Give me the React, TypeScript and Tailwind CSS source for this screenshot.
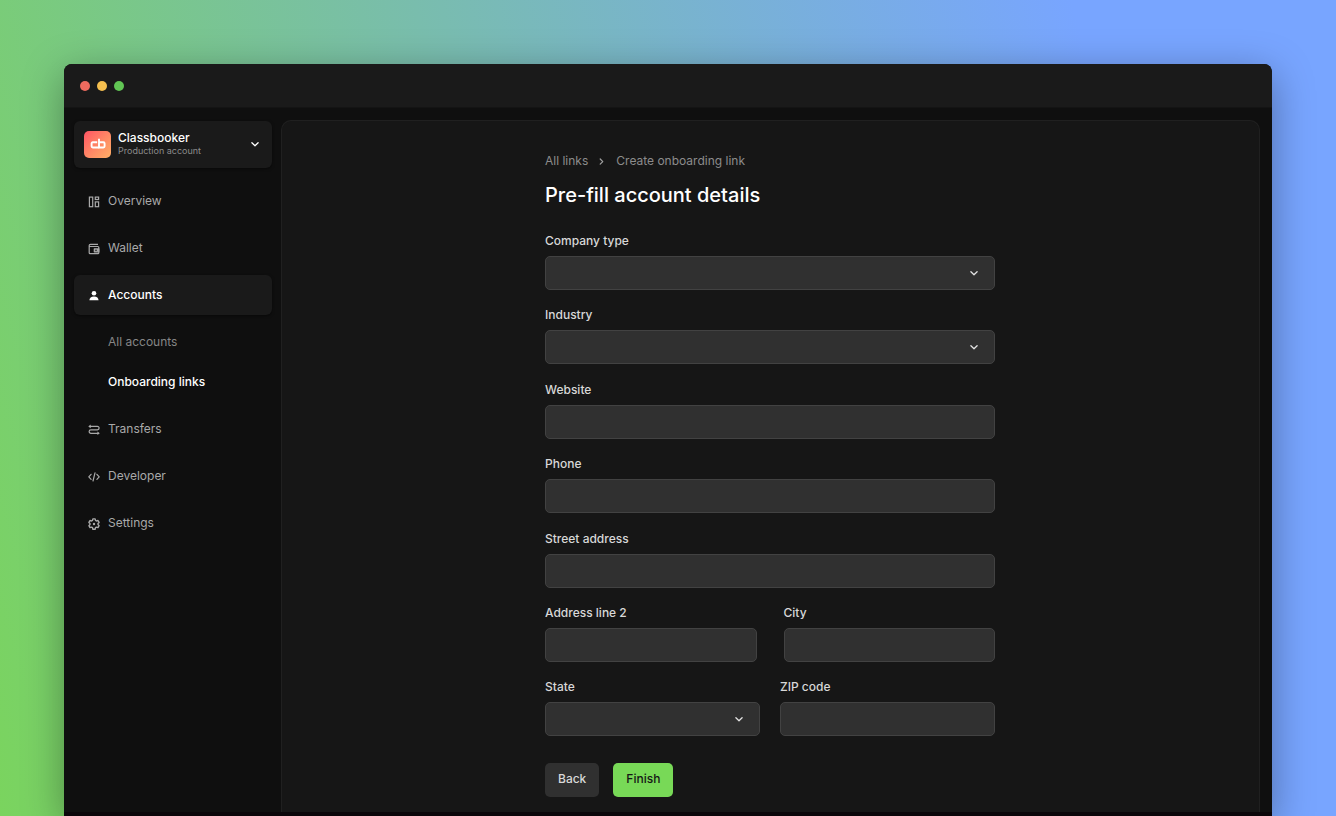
import React from "react";

type IconProps = { className?: string };

function ChevronDown({ className }: IconProps) {
  return (
    <svg viewBox="0 0 12 12" aria-hidden="true" className={className} fill="none" stroke="currentColor" strokeWidth="1.3" strokeLinecap="round" strokeLinejoin="round">
      <path d="M2.9 4.8 6 7.7l3.1-2.9" />
    </svg>
  );
}

function ChevronRight({ className }: IconProps) {
  return (
    <svg viewBox="0 0 12 12" aria-hidden="true" className={className} fill="none" stroke="currentColor" strokeWidth="1.2" strokeLinecap="round" strokeLinejoin="round">
      <path d="M4.2 4 6.8 6.6 4.2 9.2" />
    </svg>
  );
}

function OverviewIcon() {
  return (
    <svg viewBox="0 0 12 12" aria-hidden="true" className="size-3" fill="none" stroke="currentColor" strokeWidth="1.2">
      <rect x="1.4" y="1.1" width="3.3" height="9.6" />
      <rect x="7.3" y="1.1" width="3.3" height="2.4" />
      <rect x="7.3" y="5.9" width="3.3" height="4.8" />
    </svg>
  );
}

function WalletIcon() {
  return (
    <svg viewBox="0 0 12 12" aria-hidden="true" className="size-3" fill="none" stroke="currentColor" strokeWidth="1.2" strokeLinejoin="round">
      <path d="M10 1.3H2.4C1.7 1.3 1.2 1.8 1.2 2.5v7.3c0 .5.4.9.9.9h7.8c.5 0 .9-.4.9-.9V4.4c0-.5-.4-.9-.9-.9H1.2" />
      <path d="M10.8 5.9H6.3v2.9h4.5z" fill="currentColor" />
      <circle cx="8" cy="7.3" r=".8" fill="#0f0f0f" stroke="none" />
    </svg>
  );
}

function PersonIcon() {
  return (
    <svg viewBox="0 0 12 12" aria-hidden="true" className="size-3" fill="currentColor">
      <circle cx="6" cy="3.3" r="2.3" />
      <path d="M1.4 10.3c.2-2.6 1.6-3.9 4.6-3.9s4.4 1.3 4.6 3.9z" />
    </svg>
  );
}

function TransfersIcon() {
  return (
    <svg viewBox="0 0 12 12" aria-hidden="true" className="size-3" fill="none" stroke="currentColor" strokeWidth="1.2" strokeLinecap="round">
      <path d="M1.6 2.4h7.8a1.7 1.7 0 0 1 0 3.4H2.9a1.75 1.75 0 0 0 0 3.5h7.5" />
      <path d="M2.7.6v3.6L.3 2.4zM9.4 7.5v3.6l2.4-1.8z" fill="currentColor" stroke="none" />
    </svg>
  );
}

function CodeIcon() {
  return (
    <svg viewBox="0 0 12 12" aria-hidden="true" className="size-3" fill="none" stroke="currentColor" strokeWidth="1.2" strokeLinecap="round" strokeLinejoin="round">
      <path d="M3.1 3.3.8 5.8l2.3 2.5M8.9 3.3l2.3 2.5-2.3 2.5M7 1.8 5 10" />
    </svg>
  );
}

function GearIcon() {
  return (
    <svg viewBox="0 0 12 12" aria-hidden="true" className="size-3" fill="none" stroke="currentColor" strokeWidth="1.4" strokeLinejoin="round">
      <path d="M4.9.9h2.2l.4 1.5 1 .6 1.5-.5 1.1 1.9L10 5.5v1.1l1.1 1.1L10 9.6l-1.5-.5-1 .6-.4 1.5H4.9l-.4-1.5-1-.6-1.5.5L.9 7.7 2 6.6V5.5L.9 4.4 2 2.5l1.5.5 1-.6z" />
      <circle cx="6" cy="6" r="1.2" fill="currentColor" stroke="none" />
    </svg>
  );
}

function BrandMark() {
  return (
    <span className="flex size-[27px] shrink-0 items-center justify-center rounded-[5px] bg-linear-to-br from-[#ff5263] to-[#ffb066]">
      <svg viewBox="0 0 16 12" aria-hidden="true" className="h-3 w-4" fill="none" stroke="#fff" strokeWidth="1.9" strokeLinejoin="round">
        <path d="M7.2 4.3H2.8q-1.2 0-1.2 1.2v2.8q0 1.2 1.2 1.2h6.3" />
        <path d="M9 .8v8.7h4.4q1.2 0 1.2-1.2V5.5q0-1.2-1.2-1.2H9" />
      </svg>
    </span>
  );
}

function NavItem({ label, icon, active }: { label: string; icon: React.ReactNode; active?: boolean }) {
  return (
    <a
      href="#"
      aria-current={active ? "true" : undefined}
      className={
        active
          ? "flex h-10 items-center gap-2 rounded-md bg-[#1a1a1a] px-3.5 font-medium text-white shadow-[0_1px_3px_rgba(0,0,0,0.5)]"
          : "flex h-10 items-center gap-2 rounded-md px-3.5 text-[#a9a9a9]"
      }
    >
      <span className="pt-0.5">{icon}</span>
      {label}
    </a>
  );
}

const control = "h-[34px] w-full rounded-[5px] border border-[#424242] bg-[#303030] px-3 text-[#dedede] outline-none focus:border-[#78d957]";

function TextField({ id, label }: { id: string; label: string }) {
  return (
    <div className="flex flex-col gap-[7px]">
      <label htmlFor={id}>{label}</label>
      <input id={id} type="text" className={control} />
    </div>
  );
}

function SelectField({ id, label }: { id: string; label: string }) {
  return (
    <div className="flex flex-col gap-[7px]">
      <label htmlFor={id}>{label}</label>
      <div className="relative">
        <select id={id} className={`${control} appearance-none`}>
          <option value=""></option>
        </select>
        <ChevronDown className="pointer-events-none absolute top-[11px] right-[15px] size-3 text-[#e4e4e4]" />
      </div>
    </div>
  );
}

export default function App() {
  return (
    <div className="flex min-h-screen flex-col bg-[linear-gradient(75deg,#7ad45e_0%,#78a5ff_83%)] px-16 pt-16 font-['Inter',sans-serif] text-xs">
      <div className="flex grow flex-col overflow-hidden rounded-t-lg border-b-4 border-[#0b060a] bg-[#0f0f0f] shadow-[0_10px_40px_rgba(0,0,0,0.35)]">
        <header className="flex h-11 shrink-0 items-center gap-[7px] border-b border-[#141414] bg-[#1a1a1a] px-4">
          <span className="size-2.5 rounded-full bg-[#ed6a5e]" />
          <span className="size-2.5 rounded-full bg-[#f5bf4f]" />
          <span className="size-2.5 rounded-full bg-[#61c554]" />
        </header>

        <div className="flex grow gap-[9px] pr-3 pl-2.5">
          <aside className="w-[198px] shrink-0 pt-[13px]">
            <button type="button" className="flex h-[47px] w-full items-center gap-[7px] rounded-md bg-[#1a1a1a] pr-[11px] pb-px pl-2.5 text-left shadow-[0_1px_3px_rgba(0,0,0,0.5)]">
              <BrandMark />
              <span className="flex grow flex-col">
                <span className="leading-[14px] font-medium text-white">Classbooker</span>
                <span className="text-[9px] leading-3 text-[#8c8c8c]">Production account</span>
              </span>
              <ChevronDown className="size-3 text-white" />
            </button>

            <nav className="mt-[13px] flex flex-col gap-[7px]">
              <NavItem label="Overview" icon={<OverviewIcon />} />
              <NavItem label="Wallet" icon={<WalletIcon />} />
              <NavItem label="Accounts" icon={<PersonIcon />} active />
              <div className="flex flex-col">
                <a href="#" className="flex h-10 items-center pl-[34px] text-[#868686]">All accounts</a>
                <a href="#" aria-current="page" className="flex h-10 items-center pl-[34px] font-medium text-white">Onboarding links</a>
              </div>
              <NavItem label="Transfers" icon={<TransfersIcon />} />
              <NavItem label="Developer" icon={<CodeIcon />} />
              <NavItem label="Settings" icon={<GearIcon />} />
            </nav>
          </aside>

          <main className="mt-3 grow rounded-t-[10px] border border-b-0 border-[#202020] bg-[#161616] pt-8 pr-[25px] pl-6">
            <div className="mx-auto max-w-[450px]">
              <div className="flex items-center gap-2 text-[#8c8c8c]">
                <a href="#">All links</a>
                <ChevronRight className="size-3 text-[#a0a0a0]" />
                <span>Create onboarding link</span>
              </div>
              <h1 className="mt-3 text-xl leading-7 font-medium text-white">Pre-fill account details</h1>

              <form className="mt-6 flex flex-col gap-[18px] font-medium text-[#d8d8d8]">
                <div className="flex flex-col gap-[17px]">
                  <SelectField id="company-type" label="Company type" />
                  <SelectField id="industry" label="Industry" />
                </div>
                <div className="flex flex-col gap-[17px]">
                  <TextField id="website" label="Website" />
                  <TextField id="phone" label="Phone" />
                </div>
                <div className="flex flex-col gap-[17px]">
                  <TextField id="street" label="Street address" />
                  <div className="grid grid-cols-2 gap-[27px]">
                    <TextField id="address-2" label="Address line 2" />
                    <TextField id="city" label="City" />
                  </div>
                  <div className="grid grid-cols-2 gap-5">
                    <SelectField id="state" label="State" />
                    <TextField id="zip" label="ZIP code" />
                  </div>
                </div>
                <div className="mt-[9px] flex gap-3.5 pb-3">
                  <button type="button" className="h-[34px] rounded-[5px] bg-[#303030] px-[13px] pb-0.5">Back</button>
                  <button type="submit" className="h-[34px] rounded-[5px] bg-[#78d957] px-[13px] pb-0.5 text-[#161616]">Finish</button>
                </div>
              </form>
            </div>
          </main>
        </div>
      </div>
    </div>
  );
}
